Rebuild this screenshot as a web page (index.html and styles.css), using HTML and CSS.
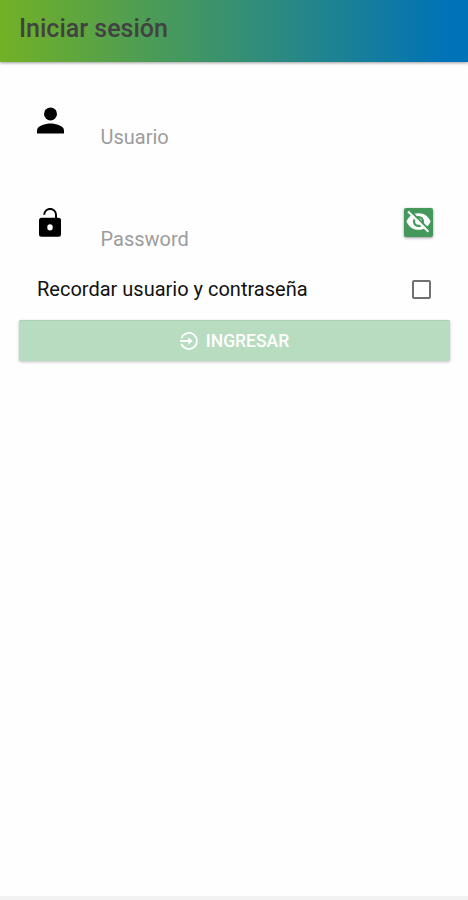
FILE: index.html
```html
<!DOCTYPE html>
<html lang="es">
<head>
<meta charset="utf-8">
<title>Iniciar sesión</title>
<link rel="stylesheet" href="styles.css">
</head>
<body>
<header class="toolbar"><h1 class="title">Iniciar sesión</h1></header>
<main class="content">
  <form class="login">
    <div class="field">
      <svg class="icon-user" viewBox="0 0 27 27"><circle cx="13.5" cy="6.9" r="6.5"/><path d="M0 26.5v-3.2C0 19 8.5 16.6 13.5 16.6S27 19 27 23.3v3.2z"/></svg>
      <span class="placeholder">Usuario</span>
    </div>
    <div class="field field-password">
      <svg class="icon-lock" viewBox="0 0 22 29"><path d="M5.2 6.8a5.9 5.9 0 0 1 11.8 0V11" fill="none" stroke="#000" stroke-width="2"/><path fill-rule="evenodd" d="M2.5 9.8h17A2.5 2.5 0 0 1 22 12.3v13.9a2.5 2.5 0 0 1-2.5 2.5h-17A2.5 2.5 0 0 1 0 26.2V12.3a2.5 2.5 0 0 1 2.5-2.5zM11 16.2a2.7 2.7 0 0 0-2.7 2.7v.8a2.7 2.7 0 0 0 5.4 0v-.8a2.7 2.7 0 0 0-2.7-2.7z"/></svg>
      <span class="placeholder">Password</span>
      <span class="toggle"><svg class="icon-eye" viewBox="0 0 24 22"><path class="eye" d="M12 3C6.5 3 2.2 6.3.5 11c1.7 4.7 6 8 11.5 8s9.8-3.3 11.5-8C21.8 6.3 17.5 3 12 3z"/><circle class="iris" cx="12" cy="11" r="5.3"/><circle class="eye" cx="12" cy="11" r="3.2"/><path class="gap" d="M3.5.2 23 19.7"/><path class="slash" d="M2 1.3 21.5 20.8"/></svg></span>
    </div>
    <div class="remember"><span class="remember-label">Recordar usuario y contraseña</span><span class="checkbox"></span></div>
    <div class="submit">
      <svg class="icon-enter" viewBox="0 0 18 18"><path d="M1.4 6.2A8 8 0 1 1 1.4 11.8M0 9h10"/><path class="arrow" d="M8.3 5.3 12.6 9l-4.3 3.7z"/></svg>
      <span class="submit-label">INGRESAR</span>
    </div>
  </form>
</main>
<footer class="bottom"></footer>
</body>
</html>
```
FILE: styles.css
```css
* { box-sizing: border-box; }
body {
  margin: 0;
  height: 900px;
  display: flex;
  flex-direction: column;
  background: #fefefe;
  font-family: Roboto, sans-serif;
  color: #111;
}
svg { display: block; flex: none; }
span { white-space: nowrap; }
.toolbar {
  height: 62px;
  flex: none;
  padding: 14px 19px;
  background: linear-gradient(90deg, #72b125 0%, #0072b8 96%);
  box-shadow: 0 1px 3px rgba(0, 0, 0, .4);
}
.title {
  margin: 0;
  font-size: 25px;
  line-height: 30px;
  font-weight: 500;
  color: #424242;
}
.content { flex: 1; padding: 37px 18px 0 19px; }
.field { display: flex; height: 102px; padding: 8px 18px 0; }
.icon-user { width: 27px; height: 27px; margin-right: 36px; }
.icon-lock { width: 22px; height: 29px; margin: -1px 39px 0 2px; }
.placeholder {
  margin: 18px 0 0 .5px;
  font-size: 20px;
  line-height: 24px;
  color: #9c9c9c;
}
.field-password { height: 71px; }
.toggle {
  display: flex;
  align-items: center;
  justify-content: center;
  width: 29px;
  height: 29px;
  margin: -1px -1px 0 auto;
  border-radius: 2px;
  background: #43985a;
  box-shadow: 0 1px 3px rgba(0, 0, 0, .4);
}
.icon-eye { width: 25px; height: 23px; margin-top: -3px; }
.eye { fill: #fff; }
.iris { fill: #43985a; }
.gap, .slash { fill: none; stroke: #43985a; stroke-width: 2; }
.slash { stroke: #fff; }
.remember {
  display: flex;
  align-items: center;
  justify-content: space-between;
  height: 34px;
  padding: 0 19px 0 18px;
  font-size: 20px;
}
.checkbox {
  width: 19px;
  height: 19px;
  margin-top: 1px;
  border: 2px solid #707070;
  border-radius: 2px;
}
.submit {
  display: flex;
  align-items: center;
  justify-content: center;
  height: 41px;
  margin-top: 14px;
  border-radius: 2px;
  background: #b8dcc0;
  color: #fff;
  box-shadow: 0 1px 3px rgba(0, 0, 0, .25), inset 0 1px 0 #a8d1b5;
}
.icon-enter {
  width: 18px;
  height: 18px;
  margin-right: 8px;
  fill: none;
  stroke: #fff;
  stroke-width: 1.8;
}
.arrow { fill: #fff; stroke: none; }
.submit-label { font-size: 17.5px; font-weight: 500; }
.bottom { height: 4px; background: #f2f2f2; }
```
